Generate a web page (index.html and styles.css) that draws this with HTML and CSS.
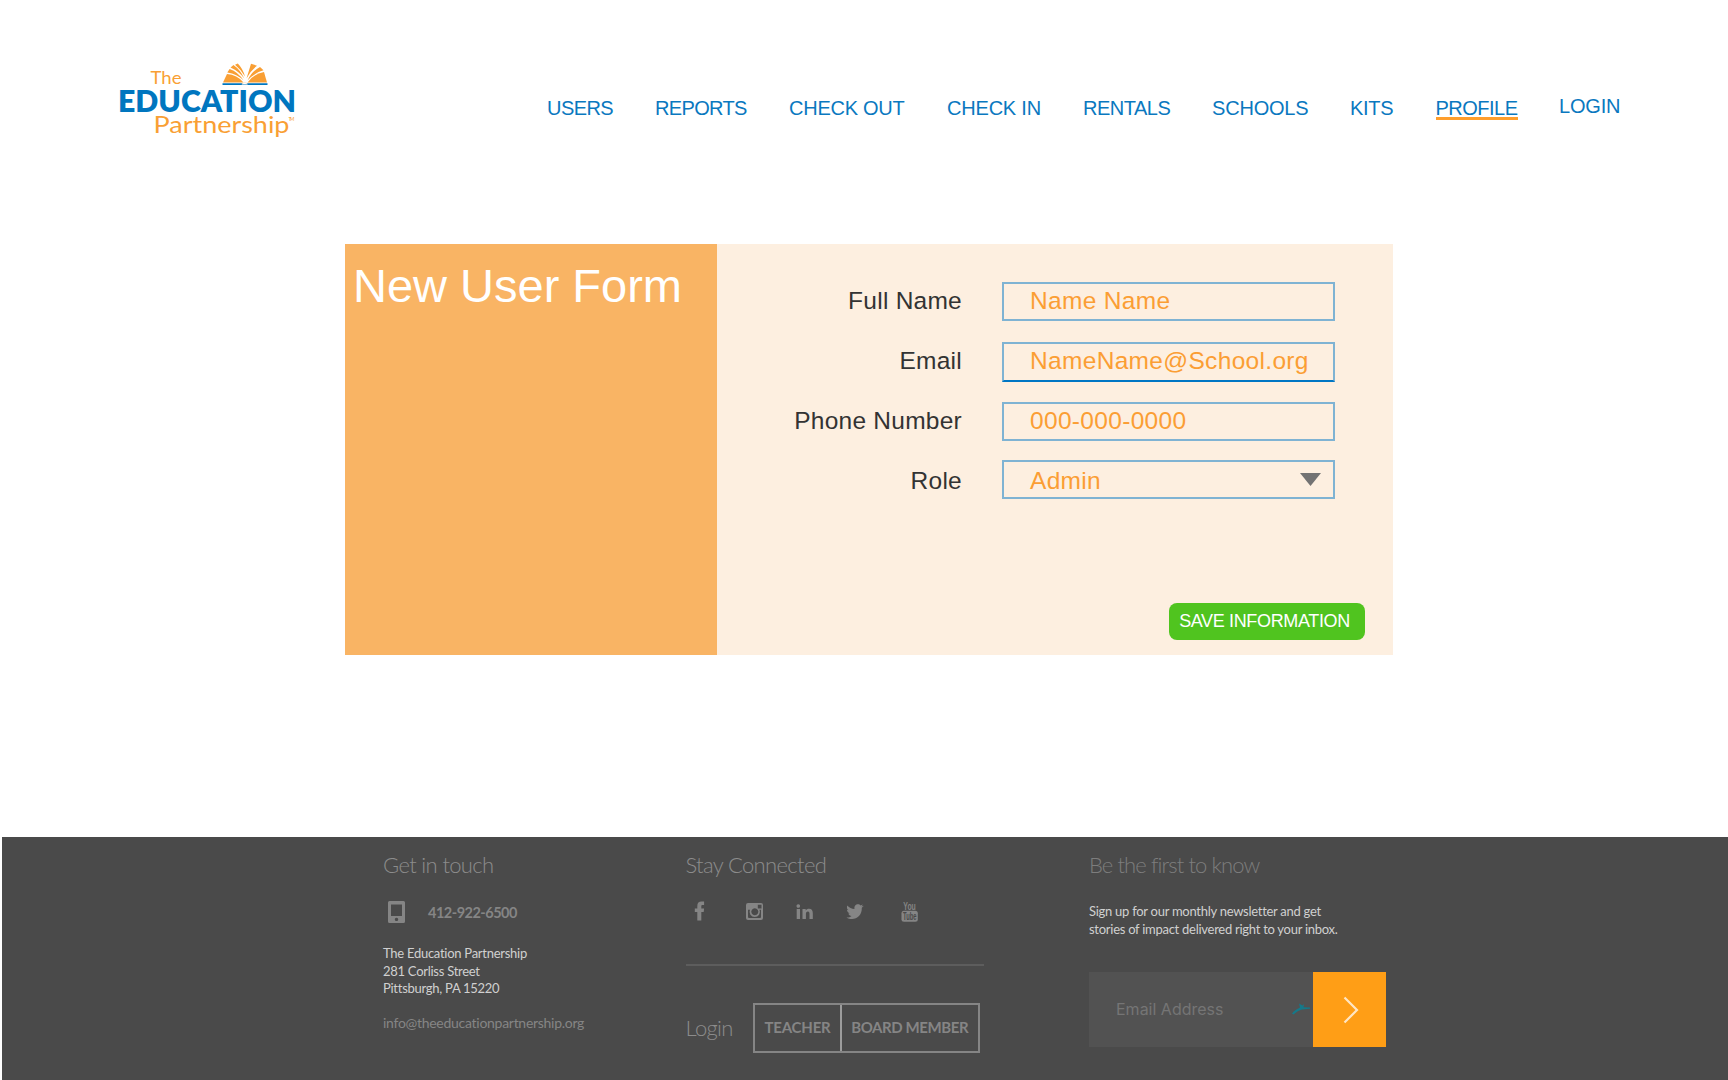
FILE: index.html
```html
<!DOCTYPE html>
<html lang="en">
<head>
<meta charset="utf-8">
<title>New User Form</title>
<link rel="stylesheet" href="styles.css">
</head>
<body>
<header class="header">
  <svg class="logo" viewBox="115 60 190 85" role="img" aria-label="The Education Partnership">
    <text class="logo-thin" x="150.500" y="84" font-size="18" textLength="31" lengthAdjust="spacingAndGlyphs">The</text>
    <text class="logo-bold" x="118" y="112.300" font-size="31" textLength="178" lengthAdjust="spacingAndGlyphs">EDUCATION</text>
    <text class="logo-thin" x="153.500" y="133" font-size="22.500" textLength="136" lengthAdjust="spacingAndGlyphs">Partnership</text>
    <text class="logo-thin" x="288.500" y="121" font-size="5" textLength="6">TM</text>
    <path fill="#0076bf" d="M222.500 83.200h45v1.800h-45z"/>
    <g fill="#f99f34">
      <path d="M223 82.500l4-8.500q10 .5 16.500 8.500z"/>
      <path d="M227.300 72.500l2.300-3.500q8.500 3 14 11.500-6.500-6.500-16.300-8z"/>
      <path d="M230.500 67.500l3-2.500q7 5 10.800 13.500-5-7-13.800-11z"/>
      <path d="M235 64.800l2.800-1.200q5 5 7.200 13-3.500-6.500-10-11.800z"/>
      <path d="M246.500 78.500l4.500-14.800 6 2q-6.500 5-10.500 12.800z"/>
      <path d="M247.500 80.500q4-9 12.500-13.500l3.500 3.300q-9.500 2.700-16 10.200z"/>
      <path d="M247.500 82.500q6-8.500 16.500-10.500l3 10.500z"/>
    </g>
    <path d="M242 84.500q0-2 2.700-2t2.700 2" fill="#fff" stroke="#f7d8b0" stroke-width=".6"/>
  </svg>
  <nav class="nav">
    <a class="t-users">USERS</a>
    <a class="t-reports">REPORTS</a>
    <a class="t-out">CHECK OUT</a>
    <a class="t-in">CHECK IN</a>
    <a class="t-rentals">RENTALS</a>
    <a class="t-schools">SCHOOLS</a>
    <a class="t-kits">KITS</a>
    <a class="t-profile active">PROFILE</a>
    <a class="t-login">LOGIN</a>
  </nav>
</header>

<main class="card">
  <section class="card-title"><h1>New User Form</h1></section>
  <form class="card-form">
    <div class="row"><span class="label">Full Name</span><span class="field">Name Name</span></div>
    <div class="row"><span class="label">Email</span><span class="field focused v-email">NameName@School.org</span></div>
    <div class="row"><span class="label">Phone Number</span><span class="field">000-000-0000</span></div>
    <div class="row role"><span class="label">Role</span><span class="field select">Admin
      <svg width="21" height="13" viewBox="0 0 21 13"><path d="M0 0h21L10.500 13z" fill="#737373"/></svg></span></div>
    <button type="button" class="save">SAVE INFORMATION</button>
  </form>
</main>

<footer class="footer">
  <section class="contact">
    <h2 class="h-touch">Get in touch</h2>
    <div class="phone">
      <svg width="17" height="23" viewBox="0 0 17 23"><path fill="#858585" fill-rule="evenodd" d="M1.500 0h14Q17 0 17 1.500v19Q17 22 15.500 22h-14Q0 22 0 20.500v-19Q0 0 1.500 0zM3 3.500v11.500h11V3.500zM8.500 16.700a1.700 1.700 0 1 0 .01 0z"/></svg>
      <b>412-922-6500</b>
    </div>
    <p class="address"><span class="a1">The Education Partnership</span><br><span class="a2">281 Corliss Street</span><br><span class="a3">Pittsburgh, PA 15220</span></p>
    <p class="mail">info@theeducationpartnership.org</p>
  </section>
  <section class="connect">
    <h2 class="h-stay">Stay Connected</h2>
    <svg class="social" width="298" height="24" viewBox="0 0 298 24" fill="#858585">
      <path d="M11.300 20.500v-8.600H8.800V8.400h2.500V6.200C11.300 3 12.800 1.600 15.500 1.600h2.600v3.300h-1.400c-1.100 0-1.400.4-1.400 1.500v2h2.800l-.4 3.500h-2.400v8.600z"/>
      <path fill-rule="evenodd" d="M62 3h13q2 0 2 2v13q0 2-2 2H62q-2 0-2-2V5q0-2 2-2zM71.800 4.800v3.600h3.700V4.800zM62 9.800V17q0 1 1 1h11q1 0 1-1V9.800h-1.500a5.200 5.200 0 1 1-9.500 0zM68.800 8.300a3.500 3.500 0 1 0 .01 0z"/>
      <path d="M110.700 9h3.300v10h-3.300zM112.300 4.200a1.800 1.800 0 1 1-.01 0zM116.500 9h3.200v1.500c.7-1.200 1.900-1.800 3.300-1.800 2.900 0 3.800 1.800 3.800 4.600V19H123.500v-5c0-1.600-.3-2.600-1.600-2.600-1.400 0-2 1-2 2.600v5h-3.400z"/>
      <path d="M177.800 5.700l-2 2c.3 7-4.600 11.300-9.700 11.300-2.200 0-4-.6-5.600-1.600 2 .1 3.600-.4 5-1.500-1.600-.2-2.700-1.100-3.200-2.500h1.400c-1.600-.6-2.600-1.800-2.700-3.600l1.400.4c-1.500-1.200-1.900-3-1-4.800 1.800 2.200 4.200 3.500 7.100 3.600-.5-2.700 1.200-4.700 3.500-4.700 1 0 2 .4 2.600 1.100l2.300-.9-1.400 2z"/>
      <text x="217.300" y="10" font-size="11.500" textLength="12.500" lengthAdjust="spacingAndGlyphs">You</text>
      <rect x="215.500" y="10.800" width="16.300" height="11" rx="2.500"/>
      <text x="217" y="20.300" font-size="10" fill="#4a4a4a" textLength="13.500" lengthAdjust="spacingAndGlyphs">Tube</text>
    </svg>
    <hr>
    <div class="login">
      <span class="login-label">Login</span>
      <div class="login-buttons"><b class="teacher">TEACHER</b><b class="board">BOARD MEMBER</b></div>
    </div>
  </section>
  <section class="newsletter">
    <h2 class="h-first">Be the first to know</h2>
    <p class="signup"><span class="s1">Sign up for our monthly newsletter and get</span><br><span class="s2">stories of impact delivered right to your inbox.</span></p>
    <div class="subscribe">
      <div class="email"><span>Email Address</span>
        <svg width="18" height="12" viewBox="0 0 18 12"><path fill="#15798a" d="M0 10.500C2 7.500 5 6 8 4.500L7 .5l3.500 2L12 1l-.5 3.200 6.500.3v1.200L10 6.500C7 7 4.500 9 1.500 11.500z"/></svg>
      </div>
      <div class="go"><svg width="16" height="28" viewBox="0 0 16 28"><path d="M1.500 1.500L14 14 1.500 26.500" fill="none" stroke="#ffe6c4" stroke-width="2.200"/></svg></div>
    </div>
  </section>
</footer>
</body>
</html>
```
FILE: styles.css
```css
* { box-sizing: border-box; }
body {
  margin: 0;
  width: 1728px;
  height: 1080px;
  overflow: hidden;
  background: #fff;
  font-family: "Liberation Sans", Arial, sans-serif;
}
h1, h2, p { margin: 0; font-weight: 400; }

.header { display: flex; height: 244px; padding: 60px 0 0 115px; }
.logo { width: 190px; height: 85px; flex: none; }
.logo text { font-family: Lato, sans-serif; }
.logo-thin { fill: #f99f34; }
.logo-bold { fill: #0076bf; font-weight: 800; }

.nav {
  display: grid;
  grid-template-columns: 108px 134px 158px 136px 129px 138px 85.500px 123.500px 70px;
  align-content: start;
  justify-items: start;
  margin: 36px 0 0 242px;
  font-size: 20px;
  line-height: 24px;
  color: #0a78bf;
  white-space: nowrap;
}
.t-users { letter-spacing: -.55px; }
.t-reports { letter-spacing: -.65px; }
.t-out { letter-spacing: -.25px; }
.t-in { letter-spacing: -.2px; }
.t-rentals { letter-spacing: -.5px; }
.t-schools { letter-spacing: -.2px; }
.t-kits { letter-spacing: -.3px; }
.t-profile { letter-spacing: -.5px; }
.t-login { letter-spacing: -.2px; margin-top: -2px; }
.active { height: 24px; border-bottom: 3px solid #ff9e2c; }

.card {
  display: grid;
  grid-template-columns: 372px 676px;
  width: 1048px;
  height: 411px;
  margin-left: 345px;
}
.card-title { background: #f9b464; padding: 16px 8px; }
.card-title h1 { color: #fff; font-size: 47px; line-height: 52px; white-space: nowrap; }
.card-form {
  display: flex;
  flex-direction: column;
  background: #fdefe0;
  padding: 38px 28px 15px 77px;
}
.row { display: flex; justify-content: space-between; width: 541px; height: 39px; margin-bottom: 21px; font-size: 24.500px; line-height: 37px; letter-spacing: .25px; }
.label { width: 168px; text-align: right; color: #333; white-space: nowrap; }
.field { width: 333px; height: 39px; padding-left: 26px; border: 2px solid #7fb3d3; color: #fb9e34; line-height: 34px; letter-spacing: .32px; }
.focused { height: 40px; border-bottom-color: #0076c4; }
.role { margin-top: -2px; line-height: 41px; }
.select { display: flex; justify-content: space-between; align-items: flex-start; padding-right: 12px; line-height: 38px; }
.select svg { margin-top: 11px; }
.save {
  width: 196px;
  height: 37px;
  margin: auto 0 0 auto;
  padding: 0 5px 0 0;
  border: 0;
  border-radius: 8px;
  background: #50c41f;
  color: #fff;
  font: 18px/35px "Liberation Sans", Arial, sans-serif;
  letter-spacing: -.35px;
  white-space: nowrap;
}

.footer {
  display: grid;
  grid-template-columns: 302.500px 403.500px 300px;
  height: 243px;
  margin: 182px 0 0 2px;
  padding: 15px 0 0 381px;
  background: #4a4a4a;
  color: #858585;
  font-family: Lato, sans-serif;
  white-space: nowrap;
}
h2 { font-size: 22px; font-weight: 300; line-height: 26px; color: #8c8c8c; letter-spacing: -.65px; }
.phone { display: flex; align-items: flex-start; gap: 23px; margin: 23px 0 0 5px; height: 44px; }
.phone b { font-size: 14.500px; line-height: 24px; letter-spacing: -.5px; }
.address { color: #d0d0d0; font-size: 13px; line-height: 17.600px; letter-spacing: -.27px; }
.mail { margin-top: 15px; font-size: 14px; line-height: 20px; letter-spacing: -.28px; }

.social { display: block; margin-top: 22px; font-family: "Liberation Sans", sans-serif; font-weight: 700; }
hr { width: 298px; height: 2px; margin: 40px 0 37px; border: 0; background: #5d5d5d; }
.login { display: flex; width: 294px; justify-content: space-between; height: 50px; }
.login-label { font-size: 22px; font-weight: 300; line-height: 50px; letter-spacing: -.65px; color: #8c8c8c; }
.login-buttons { display: grid; grid-template-columns: 87px 1fr; width: 226.500px; border: 2px solid #858585; font-size: 15px; line-height: 45px; text-align: center; }
.teacher { border-right: 2px solid #9c9c9c; letter-spacing: -.2px; }
.board { letter-spacing: -.4px; }

.signup { margin-top: 25px; color: #d0d0d0; font-size: 13px; line-height: 17.500px; letter-spacing: -.27px; }
.h-first { color: #7d7d7d; letter-spacing: -.9px; }
.subscribe { display: flex; width: 297px; height: 75px; margin-top: 34px; }
.email { display: flex; justify-content: space-between; align-items: center; width: 224px; padding: 0 3px 2px 27px; background: #525252; color: #757575; font: 16px Inter, sans-serif; }
.go { display: flex; align-items: center; justify-content: center; padding-left: 2px; width: 73px; background: #ff9e16; }
```
